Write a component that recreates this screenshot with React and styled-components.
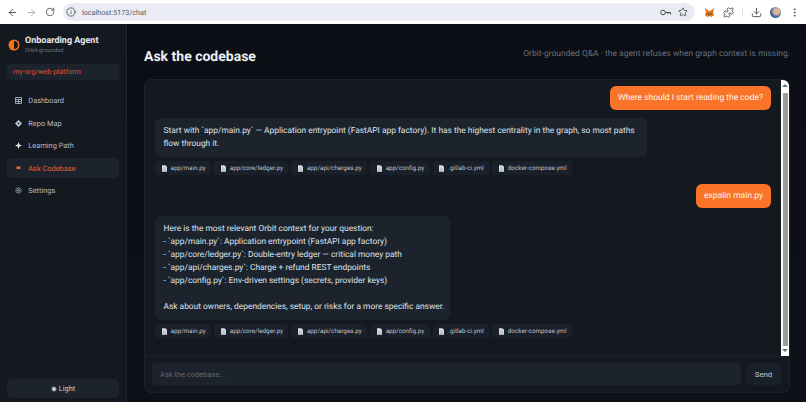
import React from "react";
import styled, { createGlobalStyle } from "styled-components";
import { ArrowLeft, ArrowRight, RotateCw, Info, Star, Puzzle, Download, MoreVertical, Settings as Gear } from "lucide-react";

const Global = createGlobalStyle`
    html, body { margin: 0; padding: 0; height: 100%; background: #0b0e14; overflow: hidden; }
    * { box-sizing: border-box; }
    body { font-family: Roboto, "Noto Sans", sans-serif; text-rendering: geometricPrecision; }
`;

const files = ["app/main.py", "app/core/ledger.py", "app/api/charges.py", "app/config.py", ".gitlab-ci.yml", "docker-compose.yml"];

function FileIcon() {
    return (
        <svg width="5" height="7" viewBox="0 0 6 8">
            <path d="M0 0h4l2 2v6H0z" fill="#d6dbe4" />
            <path d="M1 3.500h4M1 5h4M1 6.500h4" stroke="#9aa3b0" strokeWidth="0.500" />
        </svg>
    );
}

function Sources() {
    return (
        <Chips>
            {files.map(f => (
                <Chip key={f}><FileIcon />{f}</Chip>
            ))}
        </Chips>
    );
}

export default function App() {
    return (
        <Screen>
            <Global />
            <Toolbar>
                <Tool $faded={false}><ArrowLeft size={11} /></Tool>
                <Tool $faded={true}><ArrowRight size={11} /></Tool>
                <Tool $faded={false}><RotateCw size={10} /></Tool>
                <Address>
                    <Info size={10} />
                    <Url>localhost:5173/chat</Url>
                    <AddressEnd>
                        <svg width="11" height="7" viewBox="0 0 11 7" fill="none" stroke="#4a4d52" strokeWidth="1">
                            <circle cx="3" cy="3.500" r="2.300" />
                            <path d="M5.300 3.500H10.500V5.500M8 3.500V5" />
                        </svg>
                        <Star size={10} />
                    </AddressEnd>
                </Address>
                <Extensions>
                    <svg width="11" height="11" viewBox="0 0 12 12">
                        <path d="M1 1l4 3h2l4-3-1 5 1 3-3 2-1.500-1h-1L4 11 1 9l1-3z" fill="#e2761b" />
                        <path d="M3.500 7l1.500-.5L5.500 9zM8.500 7L7 6.500 6.500 9z" fill="#3a2a20" />
                    </svg>
                    <Puzzle size={11} />
                    <Divider />
                    <Download size={11} />
                    <Avatar />
                    <MoreVertical size={11} />
                </Extensions>
            </Toolbar>
            <Body>
                <Sidebar>
                    <Brand>
                        <svg width="12" height="12" viewBox="0 0 12 12">
                            <circle cx="6" cy="6" r="4.700" fill="none" stroke="#f97316" strokeWidth="1.600" />
                            <path d="M6 1.300a4.700 4.700 0 0 0 0 9.400z" fill="#f97316" />
                        </svg>
                        <div>
                            <BrandName>Onboarding Agent</BrandName>
                            <BrandSub>Orbit-grounded</BrandSub>
                        </div>
                    </Brand>
                    <Repo>my-org/web-platform</Repo>
                    <Nav>
                        <NavItem>
                            <NavIcon>
                                <svg width="7" height="7" viewBox="0 0 7 7">
                                    <path d="M.5.5h6v6h-6zM.5 2.500h6M.5 4.500h6M3.500 2.500v4" fill="none" stroke="#aab2bf" strokeWidth="0.900" />
                                </svg>
                            </NavIcon>
                            Dashboard
                        </NavItem>
                        <NavItem>
                            <NavIcon>
                                <svg width="7" height="7" viewBox="0 0 7 7">
                                    <path d="M3.500 0L7 3.500 3.500 7 0 3.500z" fill="#c6ccd6" />
                                    <circle cx="3.500" cy="3.500" r="1" fill="#1a2029" />
                                </svg>
                            </NavIcon>
                            Repo Map
                        </NavItem>
                        <NavItem>
                            <NavIcon>
                                <svg width="7" height="7" viewBox="0 0 7 7">
                                    <path d="M3.500 0l.9 2.600L7 3.500l-2.600.9L3.500 7l-.9-2.600L0 3.500l2.600-.9z" fill="#e3e7ee" />
                                </svg>
                            </NavIcon>
                            Learning Path
                        </NavItem>
                        <NavItem $active>
                            <NavIcon>
                                <svg width="7" height="7" viewBox="0 0 7 7">
                                    <path d="M1.500 1.500h4v2.500h-4z" fill="#f0643c" />
                                </svg>
                            </NavIcon>
                            Ask Codebase
                        </NavItem>
                        <NavItem>
                            <NavIcon><Gear size={7} color="#aab2bf" strokeWidth={2.500} /></NavIcon>
                            Settings
                        </NavItem>
                    </Nav>
                    <ThemeButton>
                        <svg width="6" height="6" viewBox="0 0 6 6">
                            <circle cx="3" cy="3" r="1.800" fill="#d7dce4" />
                            <path d="M3 0v6M0 3h6M.9.9l4.200 4.200M5.100.9L.9 5.100" stroke="#d7dce4" strokeWidth="0.500" />
                        </svg>
                        Light
                    </ThemeButton>
                </Sidebar>
                <Main>
                    <Header>
                        <Title>Ask the codebase</Title>
                        <Subtitle>Orbit-grounded Q&amp;A · the agent refuses when graph context is missing.</Subtitle>
                    </Header>
                    <Card>
                        <Scroller>
                            <Messages>
                                <UserBubble>Where should I start reading the code?</UserBubble>
                                <Answer>
                                    <AgentBubble>
                                        Start with `app/main.py` — Application entrypoint (FastAPI app factory). It has the highest centrality in the graph, so most paths flow through it.
                                    </AgentBubble>
                                    <Sources />
                                </Answer>
                                <UserBubble>expalin main.py</UserBubble>
                                <Answer>
                                    <AgentBubble $narrow>
                                        {"Here is the most relevant Orbit context for your question:\n- `app/main.py`: Application entrypoint (FastAPI app factory)\n- `app/core/ledger.py`: Double-entry ledger — critical money path\n- `app/api/charges.py`: Charge + refund REST endpoints\n- `app/config.py`: Env-driven settings (secrets, provider keys)\n\nAsk about owners, dependencies, setup, or risks for a more specific answer."}
                                    </AgentBubble>
                                    <Sources />
                                </Answer>
                            </Messages>
                            <ScrollTrack>
                                <ScrollArrow $up />
                                <ScrollThumb />
                                <ScrollArrow />
                            </ScrollTrack>
                        </Scroller>
                        <Composer>
                            <Input placeholder="Ask the codebase..." />
                            <Send>Send</Send>
                        </Composer>
                    </Card>
                </Main>
            </Body>
        </Screen>
    );
}

const Screen = styled.div`
    width: 806px;
    height: 402px;
    display: flex;
    flex-direction: column;
    overflow: hidden;
`;

const Toolbar = styled.div`
    height: 24px;
    flex-shrink: 0;
    background: #ffffff;
    display: flex;
    align-items: center;
    padding: 0 5px 0 6px;
    gap: 7px;
    color: #4a4d52;
`;

const Tool = styled.div`
    width: 12px;
    display: flex;
    justify-content: center;
    color: ${props => (props.$faded ? "#a9acb2" : "#4a4d52")};
`;

const Address = styled.div`
    flex: none;
    width: 632px;
    height: 18px;
    border-radius: 9px;
    background: #e9edf3;
    display: flex;
    align-items: center;
    padding: 0 7px 0 3px;
    gap: 6px;
`;

const Url = styled.span`
    font-size: 7.200px;
    color: #54575c;
`;

const AddressEnd = styled.div`
    margin-left: auto;
    display: flex;
    align-items: center;
    gap: 7px;
`;

const Extensions = styled.div`
    margin-left: 1.500px;
    display: flex;
    align-items: center;
    gap: 8px;
`;

const Divider = styled.div`
    width: 1px;
    height: 9px;
    background: #dfe3e8;
`;

const Avatar = styled.div`
    width: 11px;
    height: 11px;
    border-radius: 50%;
    background: radial-gradient(circle at 60% 40%, #d8b59b 0 30%, #3f5f9e 60%);
`;

const Body = styled.div`
    flex: 1;
    min-height: 0;
    display: flex;
`;

const Sidebar = styled.aside`
    width: 127px;
    flex-shrink: 0;
    background: #141920;
    border-right: 1px solid #1f2530;
    padding: 11px 7px 4px;
    display: flex;
    flex-direction: column;
`;

const Brand = styled.div`
    display: flex;
    align-items: center;
    gap: 5px;
    padding-left: 1px;
    height: 20px;
`;

const BrandName = styled.div`
    font-size: 9px;
    font-weight: 700;
    color: #e6e9ee;
    line-height: 12px;
`;

const BrandSub = styled.div`
    font-size: 5.800px;
    color: #6b7380;
    line-height: 8px;
`;

const Repo = styled.div`
    margin-top: 9px;
    height: 16px;
    border-radius: 4px;
    background: #1c232d;
    color: #d9593a;
    font-size: 7.200px;
    line-height: 16px;
    padding-left: 6px;
`;

const Nav = styled.nav`
    margin-top: 10.500px;
    display: flex;
    flex-direction: column;
    gap: 2.600px;
`;

const NavItem = styled.div`
    height: 20px;
    border-radius: 5px;
    display: flex;
    align-items: center;
    gap: 6.300px;
    padding-left: 8px;
    font-size: 7.400px;
    color: ${props => (props.$active ? "#e0603a" : "#b4bbc6")};
    background: ${props => (props.$active ? "#1c232d" : "transparent")};
`;

const NavIcon = styled.span`
    width: 7px;
    height: 7px;
    display: flex;
`;

const ThemeButton = styled.div`
    margin-top: auto;
    height: 19px;
    border-radius: 5px;
    background: #1c232d;
    display: flex;
    align-items: center;
    justify-content: center;
    gap: 2px;
    color: #c3c9d3;
    font-size: 7.500px;
`;

const Main = styled.main`
    flex: 1;
    min-width: 0;
    padding: 0 16px 9px 17px;
    display: flex;
    flex-direction: column;
    background: linear-gradient(#0b0e14, #0d1118);
`;

const Header = styled.header`
    height: 55px;
    flex-shrink: 0;
    display: flex;
    justify-content: space-between;
    align-items: center;
    padding-top: 10px;
`;

const Title = styled.h1`
    margin: 0;
    font-size: 14px;
    font-weight: 700;
    color: #eceff3;
`;

const Subtitle = styled.p`
    margin: 0 0 5px;
    font-size: 8.500px;
    color: #666e7b;
`;

const Card = styled.section`
    flex: 1;
    min-height: 0;
    background: #141920;
    border: 1px solid #1c222b;
    border-radius: 7px;
    display: flex;
    flex-direction: column;
`;

const Scroller = styled.div`
    flex: 1;
    min-height: 0;
    display: flex;
`;

const Messages = styled.div`
    flex: 1;
    min-width: 0;
    padding: 6px 10px 0;
    display: flex;
    flex-direction: column;
    gap: 8.400px;
`;

const UserBubble = styled.div`
    align-self: flex-end;
    height: 24px;
    padding: 0 8px;
    border-radius: 6px;
    background: #f97329;
    color: #fff3ea;
    font-size: 8.500px;
    line-height: 24px;
`;

const Answer = styled.div`
    display: flex;
    flex-direction: column;
    align-items: flex-start;
    gap: 4px;
`;

const AgentBubble = styled.div`
    width: ${props => (props.$narrow ? "295px" : "492px")};
    padding: 6.500px 2px 6.500px 8.500px;
    border-radius: 6px;
    background: #1c232d;
    color: #dfe3ea;
    font-size: 8.400px;
    line-height: 13px;
    white-space: pre-wrap;
`;

const Chips = styled.div`
    display: flex;
    gap: 3px;
`;

const Chip = styled.div`
    height: 14px;
    padding: 0 5.500px 0 6.500px;
    border-radius: 3px;
    background: #1a202a;
    color: #bcc3cd;
    font-size: 6.300px;
    display: flex;
    align-items: center;
    gap: 4px;
`;

const ScrollTrack = styled.div`
    width: 8px;
    background: #ffffff;
    border-top-right-radius: 6px;
    display: flex;
    flex-direction: column;
    align-items: center;
`;

const ScrollThumb = styled.div`
    flex: 1;
    width: 5px;
    background: #9c9c9c;
`;

const ScrollArrow = styled.div`
    flex: none;
    width: 0;
    height: 0;
    margin: ${props => (props.$up ? "4px 0 6px" : "3px 0 4px")};
    border-left: 3px solid transparent;
    border-right: 3px solid transparent;
    border-top: ${props => (props.$up ? "0" : "3px solid #6e6e6e")};
    border-bottom: ${props => (props.$up ? "3px solid #6e6e6e" : "0")};
`;

const Composer = styled.div`
    height: 36px;
    flex-shrink: 0;
    border-top: 1px solid #1c222b;
    padding: 6px 8px 6px 7px;
    display: flex;
    gap: 5px;
`;

const Input = styled.input`
    flex: 1;
    min-width: 0;
    height: 22px;
    border: 0;
    outline: none;
    border-radius: 4px;
    background: #1c232d;
    padding: 0 8px;
    font-family: inherit;
    font-size: 7.500px;
    color: #dfe3ea;
    &::placeholder {
        color: #5f6875;
    }
`;

const Send = styled.button`
    width: 35px;
    height: 22px;
    border: 0;
    border-radius: 4px;
    background: #1a202a;
    color: #c3c9d3;
    font-family: inherit;
    font-size: 7.800px;
    padding: 0;
`;
